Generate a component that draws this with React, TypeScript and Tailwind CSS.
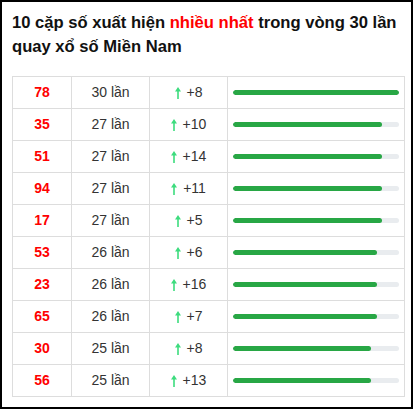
const rows = [
  { so: "78", lan: 30, tang: 8 },
  { so: "35", lan: 27, tang: 10 },
  { so: "51", lan: 27, tang: 14 },
  { so: "94", lan: 27, tang: 11 },
  { so: "17", lan: 27, tang: 5 },
  { so: "53", lan: 26, tang: 6 },
  { so: "23", lan: 26, tang: 16 },
  { so: "65", lan: 26, tang: 7 },
  { so: "30", lan: 25, tang: 8 },
  { so: "56", lan: 25, tang: 13 },
];

function ArrowUp() {
  return (
    <svg width="6" height="12" viewBox="0 0 6 12" className="shrink-0">
      <path d="M3 0 L6 4.5 L3.8 4.5 L3.8 12 L2.2 12 L2.2 4.5 L0 4.5 Z" fill="#3ddc7e" />
    </svg>
  );
}

export default function App() {
  const max = 30;
  return (
    <div
      className="w-[413px] h-[409px] border-2 border-black bg-white px-[10px] pt-[9px]"
      style={{ fontFamily: '"Liberation Sans", Arial, sans-serif' }}
    >
      <h2 className="text-[16.6px] leading-6 font-bold text-[#111]">
        10 cặp số xuất hiện <span className="text-[#ff0000]">nhiều nhất</span> trong vòng 30 lần quay xổ số Miền Nam
      </h2>
      <table className="mt-[17px] w-[392px] border-collapse table-fixed">
        <colgroup>
          <col className="w-[59px]" />
          <col className="w-[78px]" />
          <col className="w-[78px]" />
          <col className="w-[177px]" />
        </colgroup>
        <tbody>
          {rows.map((r) => (
            <tr key={r.so} className="h-[32px]">
              <td className="border border-[#dddddd] p-0 text-center text-[14px] font-bold text-[#ff0000]">{r.so}</td>
              <td className="border border-[#dddddd] p-0 text-center text-[14px] text-[#333]">{r.lan} lần</td>
              <td className="border border-[#dddddd] p-0 text-[14px] text-[#333]">
                <div className="flex items-center justify-center gap-[6px]">
                  <ArrowUp />
                  <span>+{r.tang}</span>
                </div>
              </td>
              <td className="border border-[#dddddd] px-[5px] py-0">
                <div className="h-[5px] w-full rounded-full bg-[#e9ecef] overflow-hidden">
                  <div className="h-full rounded-full bg-[#28a745]" style={{ width: `${(r.lan / max) * 100}%` }} />
                </div>
              </td>
            </tr>
          ))}
        </tbody>
      </table>
    </div>
  );
}
